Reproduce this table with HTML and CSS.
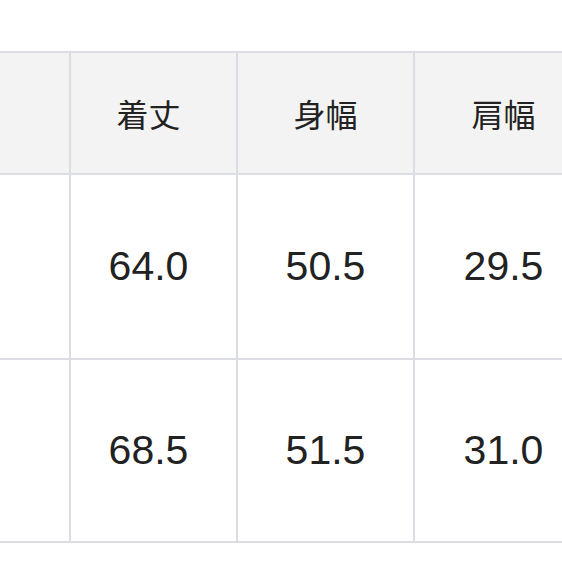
FILE: index.html
```html
<!DOCTYPE html>
<html lang="ja">
<head>
<meta charset="utf-8">
<link rel="stylesheet" href="styles.css">
</head>
<body>
<div class="frame">
  <div class="table">
    <div class="cell head"></div>
    <div class="cell head first">着丈</div>
    <div class="cell head">身幅</div>
    <div class="cell head">肩幅</div>
    <div class="cell"></div>
    <div class="cell num first">64.0</div>
    <div class="cell num">50.5</div>
    <div class="cell num">29.5</div>
    <div class="cell"></div>
    <div class="cell num first">68.5</div>
    <div class="cell num">51.5</div>
    <div class="cell num">31.0</div>
  </div>
</div>
</body>
</html>
```
FILE: styles.css
```css
html, body {
  margin: 0;
  padding: 0;
  background: #ffffff;
}
.frame {
  width: 562px;
  height: 562px;
  overflow: hidden;
  padding-top: 51px;
  box-sizing: border-box;
}
.table {
  display: grid;
  grid-template-columns: 107px 165px 175px 177px;
  grid-template-rows: 120px 183px 181px;
  gap: 2px;
  padding: 2px;
  background: #dcdde2;
  margin-left: -40px;
  width: max-content;
}
.cell {
  background: #ffffff;
  display: flex;
  align-items: center;
  justify-content: center;
  color: #222222;
}
.first {
  padding-right: 10px;
}
.head {
  background: #f3f3f3;
  font-family: "Noto Sans CJK JP", "Noto Sans", sans-serif;
  font-size: 32px;
}
.num {
  font-family: "Liberation Sans", Arial, sans-serif;
  font-size: 41px;
}
```
